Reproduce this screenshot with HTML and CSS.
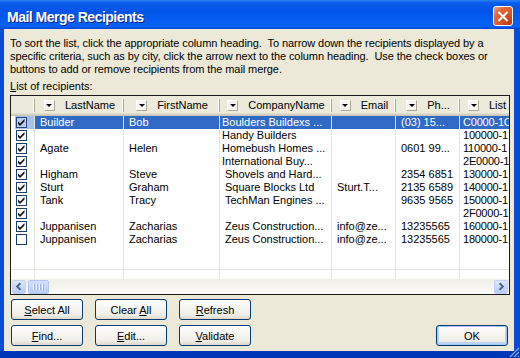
FILE: index.html
```html
<!DOCTYPE html>
<html lang="en">
<head>
<meta charset="utf-8">
<title>Mail Merge Recipients</title>
<link rel="stylesheet" href="styles.css">
</head>
<body>
<div class="window">
  <header class="titlebar">
    <span class="title">Mail Merge Recipients</span>
    <button class="close" aria-label="Close">
      <svg width="19" height="19" viewBox="0 0 19 19"><path d="M5.5 5.5 L13.5 13.5 M13.5 5.5 L5.5 13.5" stroke="#fff" stroke-width="2.2" stroke-linecap="square"/></svg>
    </button>
  </header>
  <main class="client">
    <p class="desc"><span>To sort the list, click the appropriate column heading.&nbsp; To narrow down the recipients displayed by a</span><span>specific criteria, such as by city, click the arrow next to the column heading.&nbsp; Use the check boxes or</span><span>buttons to add or remove recipients from the mail merge.</span></p>
    <div class="label"><u>L</u>ist of recipients:</div>
    <div class="listbox">
      <div class="head">
        <div class="hcell"></div>
        <div class="hcell"><span class="dd"></span><span>LastName</span></div>
        <div class="hcell"><span class="dd"></span><span>FirstName</span></div>
        <div class="hcell"><span class="dd"></span><span>CompanyName</span></div>
        <div class="hcell"><span class="dd"></span><span>Email</span></div>
        <div class="hcell"><span class="dd"></span><span>Ph...</span></div>
        <div class="hcell last"><span class="dd"></span><span>List</span></div>
      </div>
      <div class="rows">
        <div class="row sel">
          <div class="cell chk"><span class="cb"><svg width="9" height="9" viewBox="0 0 9 9"><path d="M1 3.5 L3 5.5 L7.5 1 L7.5 3.5 L3 8 L1 6 Z" fill="#1a1a1a"/></svg></span></div>
          <div class="cell">Builder</div><div class="cell">Bob</div><div class="cell tight">Boulders Buildexs ...</div><div class="cell"></div><div class="cell">(03) 15...</div><div class="cell lst">C0000-1C</div>
        </div>
        <div class="row">
          <div class="cell chk"><span class="cb"><svg width="9" height="9" viewBox="0 0 9 9"><path d="M1 3.5 L3 5.5 L7.5 1 L7.5 3.5 L3 8 L1 6 Z" fill="#1a1a1a"/></svg></span></div>
          <div class="cell"></div><div class="cell"></div><div class="cell tight">Handy Builders</div><div class="cell"></div><div class="cell"></div><div class="cell lst">100000-1</div>
        </div>
        <div class="row">
          <div class="cell chk"><span class="cb"><svg width="9" height="9" viewBox="0 0 9 9"><path d="M1 3.5 L3 5.5 L7.5 1 L7.5 3.5 L3 8 L1 6 Z" fill="#1a1a1a"/></svg></span></div>
          <div class="cell">Agate</div><div class="cell">Helen</div><div class="cell tight">Homebush Homes ...</div><div class="cell"></div><div class="cell">0601 99...</div><div class="cell lst">110000-1</div>
        </div>
        <div class="row">
          <div class="cell chk"><span class="cb"><svg width="9" height="9" viewBox="0 0 9 9"><path d="M1 3.5 L3 5.5 L7.5 1 L7.5 3.5 L3 8 L1 6 Z" fill="#1a1a1a"/></svg></span></div>
          <div class="cell"></div><div class="cell"></div><div class="cell tight">International Buy...</div><div class="cell"></div><div class="cell"></div><div class="cell lst">2E0000-1</div>
        </div>
        <div class="row">
          <div class="cell chk"><span class="cb"><svg width="9" height="9" viewBox="0 0 9 9"><path d="M1 3.5 L3 5.5 L7.5 1 L7.5 3.5 L3 8 L1 6 Z" fill="#1a1a1a"/></svg></span></div>
          <div class="cell">Higham</div><div class="cell">Steve</div><div class="cell">Shovels and Hard...</div><div class="cell"></div><div class="cell">2354 6851</div><div class="cell lst">130000-1</div>
        </div>
        <div class="row">
          <div class="cell chk"><span class="cb"><svg width="9" height="9" viewBox="0 0 9 9"><path d="M1 3.5 L3 5.5 L7.5 1 L7.5 3.5 L3 8 L1 6 Z" fill="#1a1a1a"/></svg></span></div>
          <div class="cell">Sturt</div><div class="cell">Graham</div><div class="cell">Square Blocks Ltd</div><div class="cell">Sturt.T...</div><div class="cell">2135 6589</div><div class="cell lst">140000-1</div>
        </div>
        <div class="row">
          <div class="cell chk"><span class="cb"><svg width="9" height="9" viewBox="0 0 9 9"><path d="M1 3.5 L3 5.5 L7.5 1 L7.5 3.5 L3 8 L1 6 Z" fill="#1a1a1a"/></svg></span></div>
          <div class="cell">Tank</div><div class="cell">Tracy</div><div class="cell">TechMan Engines ...</div><div class="cell"></div><div class="cell">9635 9565</div><div class="cell lst">150000-1</div>
        </div>
        <div class="row">
          <div class="cell chk"><span class="cb"><svg width="9" height="9" viewBox="0 0 9 9"><path d="M1 3.5 L3 5.5 L7.5 1 L7.5 3.5 L3 8 L1 6 Z" fill="#1a1a1a"/></svg></span></div>
          <div class="cell"></div><div class="cell"></div><div class="cell"></div><div class="cell"></div><div class="cell"></div><div class="cell lst">2F0000-1</div>
        </div>
        <div class="row">
          <div class="cell chk"><span class="cb"><svg width="9" height="9" viewBox="0 0 9 9"><path d="M1 3.5 L3 5.5 L7.5 1 L7.5 3.5 L3 8 L1 6 Z" fill="#1a1a1a"/></svg></span></div>
          <div class="cell">Juppanisen</div><div class="cell">Zacharias</div><div class="cell">Zeus Construction...</div><div class="cell">info@ze...</div><div class="cell">13235565</div><div class="cell lst">160000-1</div>
        </div>
        <div class="row">
          <div class="cell chk"><span class="cb"></span></div>
          <div class="cell">Juppanisen</div><div class="cell">Zacharias</div><div class="cell">Zeus Construction...</div><div class="cell">info@ze...</div><div class="cell">13235565</div><div class="cell lst">180000-1</div>
        </div>
        <div class="row fill1">
          <div class="cell chk"></div><div class="cell"></div><div class="cell"></div><div class="cell"></div><div class="cell"></div><div class="cell"></div><div class="cell"></div>
        </div>
        <div class="row fill2">
          <div class="cell chk"></div><div class="cell"></div><div class="cell"></div><div class="cell"></div><div class="cell"></div><div class="cell"></div><div class="cell"></div>
        </div>
      </div>
      <div class="hscroll">
        <span class="sbtn"><svg width="13" height="13" viewBox="0 0 13 13"><path d="M8 3 L4.5 6.5 L8 10" fill="none" stroke="#4D6185" stroke-width="2"/></svg></span>
        <span class="thumb"><i></i><i></i><i></i><i></i></span>
        <span class="track"></span>
        <span class="sbtn"><svg width="13" height="13" viewBox="0 0 13 13"><path d="M5 3 L8.5 6.5 L5 10" fill="none" stroke="#4D6185" stroke-width="2"/></svg></span>
      </div>
    </div>
    <div class="buttons">
      <button class="btn"><u>S</u>elect All</button>
      <button class="btn">Clear <u>A</u>ll</button>
      <button class="btn"><u>R</u>efresh</button>
      <span class="spacer"></span>
      <button class="btn"><u>F</u>ind...</button>
      <button class="btn"><u>E</u>dit...</button>
      <button class="btn"><u>V</u>alidate</button>
      <button class="btn ok">OK</button>
    </div>
  </main>
  <svg class="grip" width="12" height="12" viewBox="0 0 12 12"><path d="M11 2 L2 11 M11 6 L6 11 M11 10 L10 11" stroke="#7FA6F0" stroke-width="1.2"/></svg>
</div>
</body>
</html>
```

FILE: styles.css
```css
* { box-sizing: border-box; }
html, body { margin: 0; padding: 0; }
body {
  width: 520px;
  height: 358px;
  overflow: hidden;
  background: #fff;
  font-family: "Liberation Sans", Arial, sans-serif;
  font-size: 11px;
  color: #000;
}
.window {
  position: relative;
  width: 520px;
  height: 358px;
  display: flex;
  flex-direction: column;
  background: linear-gradient(180deg, #0A4BD6 0, #0A4BD6 98%, #0036B8 98%);
}
.titlebar {
  height: 29px;
  flex: none;
  display: flex;
  justify-content: space-between;
  align-items: flex-start;
  padding: 0 7px 0 7px;
  background: linear-gradient(180deg, #2A85F5 0, #0A5AEB 10%, #0055E8 40%, #0962F8 86%, #0962F8 92%, #0050E0 96%, #003DD0 100%);
}
.title {
  color: #fff;
  font: bold 14px "Liberation Sans", Arial, sans-serif;
  letter-spacing: -0.5px;
  line-height: 16px;
  margin-top: 9px;
  text-shadow: 1px 1px 0 #0A1D8A;
}
.close {
  width: 20px;
  height: 20px;
  margin-top: 6px;
  padding: 0;
  border: 1px solid #fff;
  border-radius: 3px;
  background: radial-gradient(circle at 85% 85%, #C23A10 0, #D9582B 45%, #E2683C 70%, #F3A88C 100%);
  display: flex;
  align-items: center;
  justify-content: center;
}
.close svg { display: block; }
.client {
  flex: 1;
  margin: 0 6px 7px 4px;
  background: #ECE9D8;
  padding: 8px 4px 0 6px;
  display: flex;
  flex-direction: column;
}
.desc { margin: 0; line-height: 13px; letter-spacing: -0.08px; }
.desc span { display: block; white-space: nowrap; }
.label { margin-top: 4px; line-height: 13px; }
.listbox {
  margin-top: 2px;
  width: 500px;
  height: 200px;
  border: 1px solid #1a1a1a;
  background: #fff;
  display: flex;
  flex-direction: column;
  overflow: hidden;
}
.head, .row {
  display: grid;
  grid-template-columns: 24px 89px 96px 112px 64px 64px 1fr;
}
.head {
  height: 20px;
  flex: none;
  background: linear-gradient(180deg, #EBEADB 0, #EBEADB 85%, #E2DECD 85%, #E2DECD 90%, #D6D2C2 90%, #D6D2C2 95%, #CBC7B8 95%);
}
.hcell {
  display: flex;
  align-items: center;
  justify-content: center;
  gap: 10px;
  padding-bottom: 2px;
  white-space: nowrap;
  overflow: hidden;
  background:
    linear-gradient(#ACA899, #ACA899) right 0 top 3px / 1px 13px no-repeat,
    linear-gradient(#fff, #fff) right 1px top 3px / 1px 13px no-repeat;
}
.hcell.last { justify-content: flex-start; padding-left: 8px; background: none; }
.dd {
  width: 11px;
  height: 11px;
  flex: none;
  border: 1px solid;
  border-color: #fff #ACA899 #ACA899 #fff;
  background: #F6F5F0;
  display: flex;
  align-items: center;
  justify-content: center;
}
.dd::after {
  content: "";
  border-left: 3px solid transparent;
  border-right: 3px solid transparent;
  border-top: 3px solid #000;
}
.rows { flex: 1; display: flex; flex-direction: column; }
.row { height: 13px; line-height: 13px; flex: none; }
.cell {
  border-right: 1px solid #E3E3E0;
  padding-left: 5px;
  white-space: nowrap;
  overflow: hidden;
}
.cell:last-child { border-right: 0; }
.cell.tight { padding-left: 2px; }
.cell.lst { padding-left: 3px; letter-spacing: -0.2px; }
.cell.chk { padding: 1px 0 0 5px; }
.cb {
  display: flex;
  align-items: center;
  justify-content: center;
  width: 11px;
  height: 11px;
  border: 1px solid #1C3E6E;
  background: #fff;
}
.cb svg { display: block; }
.row.sel .cell { background: #316AC5; color: #fff; }
.row.sel .cell.chk { background: linear-gradient(90deg, #fff 4px, #A9C0E8 4px); }
.row.sel .cb { background: #BACDEF; border-color: #23467F; }
.row.fill1 { height: 24px; border-bottom: 1px solid #E3E3E0; }
.row.fill2 { flex: 1; height: auto; }
.hscroll {
  height: 15px;
  flex: none;
  display: flex;
  align-items: center;
  padding: 0 1px;
  background: linear-gradient(180deg, #F0EFE8, #FCFCFA);
}
.sbtn {
  width: 14px;
  height: 14px;
  flex: none;
  border-radius: 2px;
  border: 1px solid #C3D3F7;
  background: linear-gradient(180deg, #DCE6FD, #B9CCF5);
  display: flex;
  align-items: center;
  justify-content: center;
}
.sbtn svg { display: block; }
.thumb {
  width: 21px;
  height: 14px;
  margin-left: 2px;
  flex: none;
  border-radius: 2px;
  border: 1px solid #B2C6F3;
  background: linear-gradient(180deg, #D3DFFD, #BBCEF7);
  display: flex;
  align-items: center;
  justify-content: center;
  gap: 1px;
}
.thumb i {
  display: block;
  width: 1px;
  height: 6px;
  background: #EEF3FE;
  box-shadow: 1px 0 0 #9DB5EE;
  margin-right: 1px;
}
.track { flex: 1; }
.buttons {
  display: grid;
  grid-template-columns: 72px 72px 72px 1fr;
  grid-template-rows: 21px 21px;
  column-gap: 12px;
  row-gap: 5px;
  margin-top: 4px;
  padding: 0 2px 0 1px;
}
.btn {
  width: 72px;
  height: 21px;
  padding: 0;
  border: 1px solid #003C74;
  border-radius: 3px;
  background: linear-gradient(180deg, #FFFFFF 0, #F7F6F2 40%, #EFEDE6 80%, #DCD7CB 100%);
  font: 11px "Liberation Sans", Arial, sans-serif;
  color: #000;
  text-align: center;
}
.btn.ok {
  justify-self: end;
  box-shadow: inset 0 0 0 1px #A9C6F2, inset 0 -1px 0 2px #BCD3F6;
}
.grip { position: absolute; right: 0; bottom: 0; }
```
